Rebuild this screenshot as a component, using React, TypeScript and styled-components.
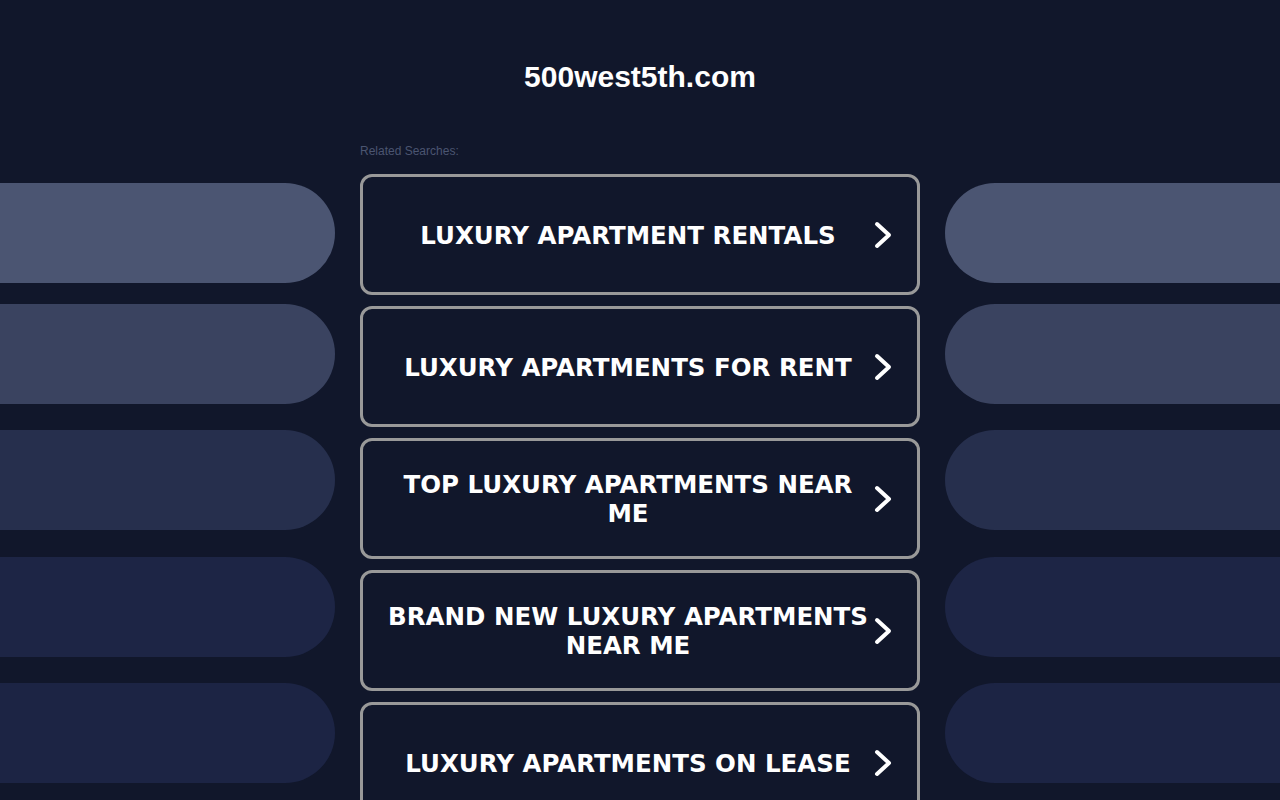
import React from 'react';
import styled, {createGlobalStyle} from 'styled-components';

const searches = [
    'Luxury Apartment Rentals',
    'Luxury Apartments for Rent',
    'Top Luxury Apartments Near Me',
    'Brand New Luxury Apartments Near Me',
    'Luxury Apartments on Lease',
]

// side shapes: colour and distance from the shape above
const PILLS = [
    {color: '#4b5572', gap: 0},
    {color: '#3a4360', gap: 21},
    {color: '#262f4d', gap: 26},
    {color: '#1d2545', gap: 27},
    {color: '#1c2444', gap: 26},
]

const GlobalStyle = createGlobalStyle`
    html, body {
        margin: 0;
        padding: 0;
        background: #11172b;
        overflow: hidden;
    }
    body {
        font-family: "Liberation Sans", Arial, sans-serif;
    }
`

const Page = styled.main`
    height: 800px;
    overflow: hidden;
    background: #11172b;
`

const Title = styled.h1`
    margin: 0;
    padding-top: 60px;
    text-align: center;
    font-family: "Liberation Sans", Arial, sans-serif;
    font-size: 30px;
    line-height: 34px;
    font-weight: 700;
    color: #ffffff;
`

const Layout = styled.div`
    display: grid;
    grid-template-columns: 1fr 560px 1fr;
    column-gap: 25px;
    margin-top: 50px;
`

const SideColumn = styled.div`
    display: flex;
    flex-direction: column;
    padding-top: 39px;
`

const Pill = styled.div<{ $color: string, $side: 'left' | 'right', $gap: number }>`
    height: 100px;
    margin-top: ${p => p.$gap}px;
    background: ${p => p.$color};
    border-radius: ${p => p.$side === 'left' ? '0 50px 50px 0' : '50px 0 0 50px'};
`

const Center = styled.section`
    display: flex;
    flex-direction: column;
`

const Label = styled.div`
    font-size: 12px;
    line-height: 14px;
    color: #4b5571;
    margin-bottom: 16px;
`

const List = styled.div`
    display: flex;
    flex-direction: column;
    gap: 11px;
`

const SearchLink = styled.a`
    box-sizing: border-box;
    display: flex;
    align-items: center;
    height: 121px;
    padding: 0 23px;
    border: 3px solid #999999;
    border-radius: 12px;
    background: #11172b;
    color: #ffffff;
    text-decoration: none;
`

const LinkText = styled.span`
    flex: 1;
    padding-top: 1px;
    text-align: center;
    font-family: "DejaVu Sans", Verdana, sans-serif;
    font-weight: 700;
    font-size: 24.5px;
    line-height: 29px;
    text-transform: uppercase;
`

const Chevron = () => (
    <svg width="24" height="30" viewBox="0 0 24 30" fill="none">
        <path d="M7 4 L19 15 L7 26" stroke="#ffffff" strokeWidth="4" strokeLinecap="round" strokeLinejoin="round"/>
    </svg>
)

const Side = ({side}: { side: 'left' | 'right' }) => (
    <SideColumn>
        {PILLS.map(p => <Pill key={p.color} $color={p.color} $gap={p.gap} $side={side}/>)}
    </SideColumn>
)

const App = () => (
    <Page>
        <GlobalStyle/>
        <Title>500west5th.com</Title>
        <Layout>
            <Side side="left"/>
            <Center>
                <Label>Related Searches:</Label>
                <List>
                    {searches.map(s => (
                        <SearchLink key={s} href="#">
                            <LinkText>{s}</LinkText>
                            <Chevron/>
                        </SearchLink>
                    ))}
                </List>
            </Center>
            <Side side="right"/>
        </Layout>
    </Page>
)

export default App;
